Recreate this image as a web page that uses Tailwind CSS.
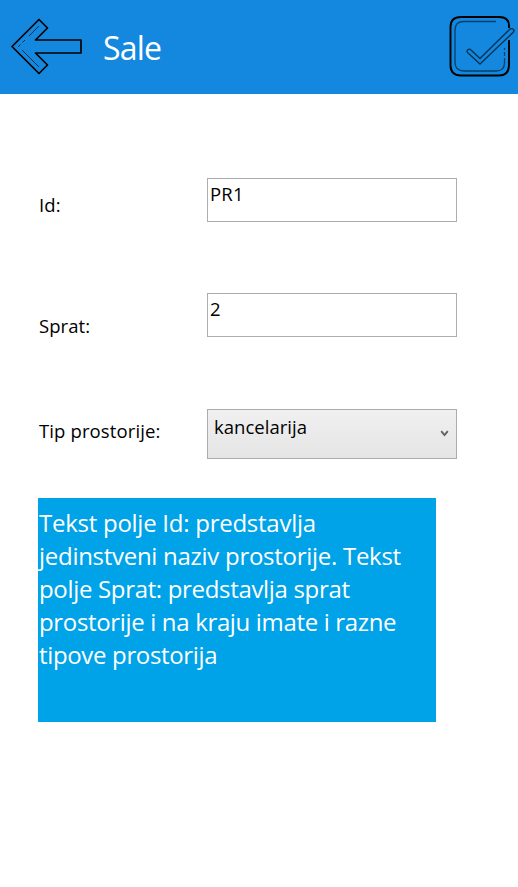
<!DOCTYPE html>
<html lang="sr">
<head>
<meta charset="utf-8">
<title>Sale</title>
<script src="https://cdn.jsdelivr.net/npm/@tailwindcss/browser@4"></script>
</head>
<body class="w-[518px] h-[887px] overflow-hidden bg-white text-black font-['Open_Sans',sans-serif] text-[18.5px] leading-6">
<header class="flex h-[94px] bg-[#1388de]">
  <svg class="w-[90px] h-[94px] shrink-0" viewBox="0 0 90 94" fill="none" stroke="#000">
    <path stroke-width="1.7" stroke-linejoin="round" d="M12 46.5 39 19.5 47.500 28 35.5 40H81V53H35.5L47.500 65 39 73.500Z"/>
    <path stroke="#04263f" stroke-width="0.9" d="M39 26 29 36M25 40 22.500 42.500M20.500 44.500 18 47M22 50 39 67"/>
  </svg>
  <h1 class="ml-[13px] mt-[28px] text-[32px] leading-[40px] text-white tracking-[-0.8px]">Sale</h1>
  <svg class="ml-auto w-[80px] h-[94px] shrink-0" viewBox="0 0 80 94" fill="none" stroke="#000">
    <path stroke-width="1.900" d="M71 28V26Q71 17 61 17H23Q12.500 17 12.500 27V65Q12.500 75.500 23 75.500H61Q71 75.500 71 65V40"/>
    <path stroke="#07406b" stroke-width="1.300" d="M58 21.500H26Q17 21.500 17 30V62Q17 71 26 71H58Q66.500 71 66.500 63V58M66.500 56V52M66.500 50V48"/>
    <path stroke="#053253" stroke-width="1.400" stroke-linejoin="round" d="M42 58.500 72 29Q74 28 75.500 29.500Q76.500 31 75 32.500L42 64 29.500 52.500Q28.500 51 30 49.500Q31.500 48.500 33 50Z"/>
  </svg>
</header>
<main class="pl-[38px]">
  <form>
    <div class="flex pt-[84px] h-[199px]">
      <label class="w-[169px] pl-px pt-[15px]"><span class="tracking-[0.15px]">Id:</span></label>
      <div class="w-[250px] h-[44px] border border-[#abadb3] pl-[2px] pt-[3px]"><span class="tracking-[0.2px]">PR1</span></div>
    </div>
    <div class="flex h-[116px]">
      <label class="w-[169px] pl-px pt-[21px]"><span class="tracking-[0.05px]">Sprat:</span></label>
      <div class="w-[250px] h-[44px] border border-[#abadb3] pl-[2px] pt-[3px]">2</div>
    </div>
    <div class="flex h-[89px]">
      <label class="w-[169px] pl-px pt-[10px]"><span class="tracking-[0.12px]">Tip prostorije:</span></label>
      <div class="flex w-[250px] h-[50px] border border-[#acacac] bg-linear-to-b from-[#f0f0f0] to-[#e5e5e5] pl-[6px] pt-[5px]">
        <span class="tracking-[0.02px]">kancelarija</span>
        <svg class="ml-auto mr-[7px] mt-[14px] w-[9px] h-[9px]" viewBox="0 0 9 9" fill="none" stroke="#606060" stroke-width="1.900"><path d="M1.200 2.200 4.500 6 7.800 2.200"/></svg>
      </div>
    </div>
  </form>
  <p class="w-[398px] h-[224px] bg-[#00a2e8] pl-px pt-[8px] text-[24px] leading-[33px] text-white whitespace-nowrap">
    <span class="tracking-[-0.26px]">Tekst polje Id: predstavlja</span><br>
    <span class="tracking-[-0.28px]">jedinstveni naziv prostorije. Tekst</span><br>
    <span class="tracking-[-0.33px]">polje Sprat: predstavlja sprat</span><br>
    <span class="tracking-[-0.34px]">prostorije i na kraju imate i razne</span><br>
    <span class="tracking-[-0.34px]">tipove prostorija</span>
  </p>
</main>
</body>
</html>
